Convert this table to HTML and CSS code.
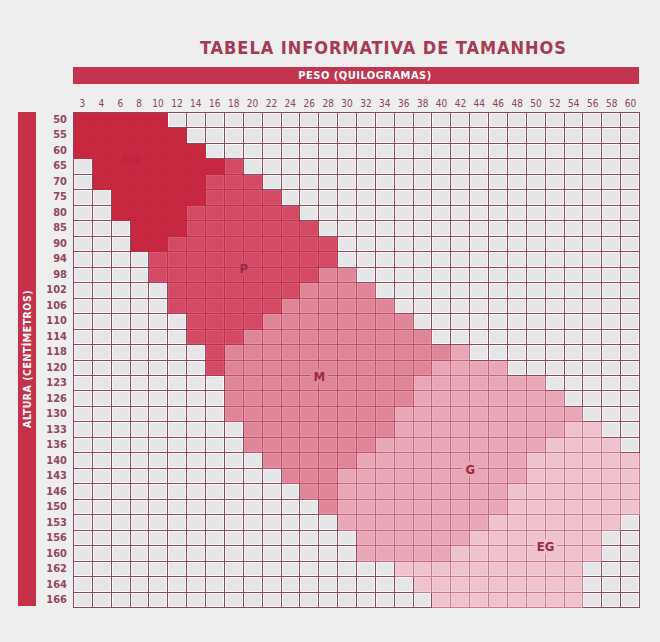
FILE: index.html
```html
<!DOCTYPE html>
<html lang="pt">
<head>
<meta charset="utf-8">
<title>Tabela informativa de tamanhos</title>
<link rel="stylesheet" href="styles.css">
</head>
<body>
<div class="page">
  <h1 class="title">TABELA INFORMATIVA DE TAMANHOS</h1>
  <div class="top">
    <div class="bar">PESO (QUILOGRAMAS)</div>
    <div class="cols">
      <span>3</span><span>4</span><span>6</span><span>8</span><span>10</span><span>12</span><span>14</span><span>16</span><span>18</span><span>20</span>
      <span>22</span><span>24</span><span>26</span><span>28</span><span>30</span><span>32</span><span>34</span><span>36</span><span>38</span><span>40</span>
      <span>42</span><span>44</span><span>46</span><span>48</span><span>50</span><span>52</span><span>54</span><span>56</span><span>58</span><span>60</span>
    </div>
  </div>
  <div class="body">
    <div class="vbar"><span>ALTURA (CENTÍMETROS)</span></div>
    <div class="rows">
      <span>50</span><span>55</span><span>60</span><span>65</span><span>70</span><span>75</span><span>80</span><span>85</span>
      <span>90</span><span>94</span><span>98</span><span>102</span><span>106</span><span>110</span><span>114</span><span>118</span>
      <span>120</span><span>123</span><span>126</span><span>130</span><span>133</span><span>136</span><span>140</span><span>143</span>
      <span>146</span><span>150</span><span>153</span><span>156</span><span>160</span><span>162</span><span>164</span><span>166</span>
    </div>
    <div class="grid" id="grid"></div>
  </div>
</div>
<script src="app.js"></script>
</body>
</html>
```

FILE: styles.css
```css
* { box-sizing: border-box; }
body {
  margin: 0;
  background: #eeeeef;
  font-family: "DejaVu Sans Condensed", "DejaVu Sans", sans-serif;
  font-stretch: condensed;
}
.page {
  width: 660px;
  padding: 38px 0 0 18px;
}
.title {
  margin: 0;
  padding-left: 182px;
  font-size: 18px;
  line-height: 20px;
  font-weight: bold;
  color: #a63a53;
  letter-spacing: 0.95px;
}
.top {
  margin-left: 55px;
  margin-top: 9px;
}
.bar {
  width: 566px;
  height: 17px;
  background: #c3344f;
  color: #fff;
  font-size: 11px;
  line-height: 17px;
  font-weight: bold;
  text-align: center;
  letter-spacing: 0.5px;
  padding-left: 18px;
}
.cols {
  width: 567px;
  height: 28px;
  display: grid;
  grid-template-columns: repeat(30, 1fr);
  align-items: end;
  padding-bottom: 2px;
  font-size: 10px;
  line-height: 12px;
  color: #8e4159;
  text-align: center;
}
.body {
  display: flex;
  align-items: flex-start;
}
.vbar {
  width: 18px;
  height: 494px;
  background: #c8304a;
  display: flex;
  align-items: center;
  justify-content: center;
}
.vbar span {
  writing-mode: vertical-rl;
  transform: rotate(180deg);
  color: #fff;
  font-size: 10.5px;
  font-weight: bold;
  letter-spacing: 0.5px;
}
.rows {
  width: 31px;
  height: 496px;
  margin-right: 6px;
  display: grid;
  grid-template-rows: repeat(32, 1fr);
  align-items: center;
  text-align: right;
  font-size: 11px;
  line-height: 12px;
  font-weight: bold;
  color: #93455d;
}
.grid {
  position: relative;
  width: 567px;
  height: 496px;
  display: grid;
  grid-template-columns: repeat(30, 1fr);
  grid-template-rows: repeat(32, 1fr);
  border-top: 1px solid #8e4660;
  border-left: 1px solid #8e4660;
}
.cell {
  border-right: 1px solid #8e4660;
  border-bottom: 1px solid #8e4660;
}
.w {
  background: #e6e6e9;
  box-shadow: inset 0 0 0 1px #f7f7f8;
}
.rn {
  background: #c8283f;
  border-color: #c3263d;
}
.p {
  background: #d44a64;
  border-color: #b8334f;
  box-shadow: inset 0 0 0 1px rgba(255,255,255,.08);
}
.m {
  background: #df8598;
  border-color: #c24e6c;
  box-shadow: inset 0 0 0 1px rgba(255,255,255,.12);
}
.g {
  background: #e8a7b6;
  border-color: #c56381;
  box-shadow: inset 0 0 0 1px rgba(255,255,255,.15);
}
.eg {
  background: #efc3ce;
  border-color: #c97891;
  box-shadow: inset 0 0 0 1px rgba(255,255,255,.2);
}
.tag {
  position: absolute;
  transform: translate(-50%, -50%);
  font-size: 13px;
  line-height: 13px;
  font-weight: bold;
  padding: 1px 3px;
  color: #9e2848;
}
.tag.rn { color: #bf243b; background: transparent; box-shadow: none; }
.tag.p { box-shadow: none; }
.tag.m { box-shadow: none; }
.tag.g { box-shadow: none; }
.tag.eg { box-shadow: none; }
```

FILE: app.js
```js
(function () {
  // per row: [white, RN, P, M, G, EG] counts from the left; rest is white
  var rows = [
    [0,5,0,0,0,0],[0,6,0,0,0,0],[0,7,0,0,0,0],[1,7,1,0,0,0],
    [1,6,3,0,0,0],[2,5,4,0,0,0],[2,4,6,0,0,0],[3,3,7,0,0,0],
    [3,2,9,0,0,0],[4,0,10,0,0,0],[4,0,9,2,0,0],[5,0,7,4,0,0],
    [5,0,6,6,0,0],[6,0,4,8,0,0],[6,0,3,10,0,0],[7,0,1,12,1,0],
    [7,0,1,11,4,0],[8,0,0,10,7,0],[8,0,0,10,8,0],[8,0,0,9,10,0],
    [9,0,0,8,9,2],[9,0,0,7,9,4],[10,0,0,5,9,6],[11,0,0,3,10,6],
    [12,0,0,2,9,7],[13,0,0,1,9,7],[14,0,0,0,8,7],[15,0,0,0,6,7],
    [15,0,0,0,5,8],[17,0,0,0,0,10],[18,0,0,0,0,9],[19,0,0,0,0,8]
  ];
  var names = ['w','rn','p','m','g','eg'];
  var grid = document.getElementById('grid');
  var frag = document.createDocumentFragment();
  rows.forEach(function (seg) {
    var list = [];
    seg.forEach(function (n, k) { for (var i = 0; i < n; i++) list.push(names[k]); });
    while (list.length < 30) list.push('w');
    list.forEach(function (c) {
      var d = document.createElement('div');
      d.className = 'cell ' + c;
      frag.appendChild(d);
    });
  });
  grid.appendChild(frag);
  var tags = [
    ['RN', 3, 3, 'rn'], ['P', 9, 10, 'p'], ['M', 13, 17, 'm'],
    ['G', 21, 23, 'g'], ['EG', 25, 28, 'eg']
  ];
  tags.forEach(function (t) {
    var s = document.createElement('div');
    s.className = 'tag ' + t[3];
    s.textContent = t[0];
    s.style.left = (t[1] / 30 * 100) + '%';
    s.style.top = (t[2] / 32 * 100) + '%';
    grid.appendChild(s);
  });
})();
```
